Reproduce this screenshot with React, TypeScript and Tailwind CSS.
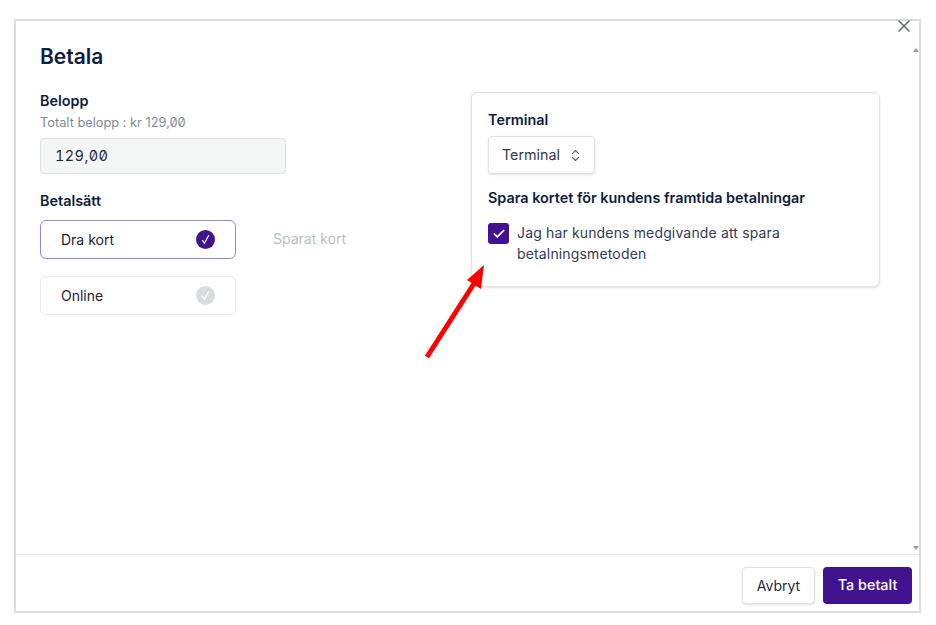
import React from 'react';
import { Check, ChevronsUpDown, X } from 'lucide-react';

function MethodCard({ label, active }: { label: string; active?: boolean }) {
  return (
    <div
      className={
        active
          ? 'flex h-[39px] w-[196px] items-center justify-between rounded-md border border-[#9b84cf] bg-white pl-[20px] pr-[20px]'
          : 'flex h-[39px] w-[196px] items-center justify-between rounded-md border border-[#e8eaec] bg-white pl-[20px] pr-[20px]'
      }
    >
      <span className="text-[14px] text-[#1c2230]">{label}</span>
      <span
        className={
          active
            ? 'flex h-[19px] w-[19px] items-center justify-center rounded-full bg-[#42138f] text-white'
            : 'flex h-[19px] w-[19px] items-center justify-center rounded-full bg-[#d8dde2] text-white'
        }
      >
        <svg width="19" height="19" viewBox="0 0 19 19" fill="none" stroke="currentColor" strokeWidth="1.2">
          <path d="M6.3 10.2 L8.4 13.2 L12.8 5.2" />
        </svg>
      </span>
    </div>
  );
}

export default function App() {
  return (
    <div className="relative h-[625px] w-[936px] overflow-hidden bg-white pl-[14px] pt-[19px] font-['Inter',sans-serif] text-[#0e1c40]">
      <div className="relative flex h-[594px] w-[907px] flex-col border-2 border-[#dcdcdc] bg-white">
        {/* close + scrollbar arrows */}
        <X className="absolute right-[5px] top-[-5px] h-[20px] w-[20px] text-[#5c6f7e]" strokeWidth={2} />
        <div className="absolute right-[0px] top-[27px] h-0 w-0 border-x-[3px] border-b-[4px] border-x-transparent border-b-[#9a9a9a]" />
        <div className="absolute right-[0px] top-[525px] h-0 w-0 border-x-[3px] border-t-[4px] border-x-transparent border-t-[#9a9a9a]" />

        {/* Main content */}
        <div className="flex flex-1 px-6">
          <div className="w-[431px] pt-[21px]">
            <h1 className="text-[21px] font-semibold leading-[30px]">Betala</h1>
            <h2 className="mt-[19px] text-[14.4px] font-semibold leading-[20px]">Belopp</h2>
            <p className="mt-[2px] text-[12.8px] leading-[20px] text-[#7f8c96] [font-feature-settings:'zero']">
              Totalt belopp : kr 129,00
            </p>
            <div className="mt-[5px] flex h-9 w-[246px] items-center rounded border border-[#dde1e3] bg-[#f5f7f7] pl-[14px] text-[14.5px] tracking-[0.4px] text-[#1c2a44] [font-feature-settings:'zero','tnum']">
              129,00
            </div>
            <h2 className="mt-[17px] text-[14.4px] font-semibold leading-[20px]">Betalsätt</h2>
            <div className="mt-[9px] flex items-center">
              <MethodCard label="Dra kort" active />
              <span className="mb-[2px] ml-[37px] text-[14px] text-[#b9bfc4]">Sparat kort</span>
            </div>
            <div className="mt-[17px]">
              <MethodCard label="Online" />
            </div>
          </div>

          <div className="mt-[71px] h-[195px] w-[409px] rounded-md border border-[#dfe3e8] bg-white px-4 pt-[17px] shadow-sm">
            <h2 className="text-[14.4px] font-semibold leading-[20px]">Terminal</h2>
            <div className="mt-[6px] flex h-[38px] w-[107px] items-center gap-[8px] rounded border border-[#dfe3e8] bg-white pl-[13px] text-[14.3px] text-[#333a4d] shadow-sm">
              Terminal
              <ChevronsUpDown className="h-[15px] w-[15px] text-[#5c6470]" strokeWidth={1.75} />
            </div>
            <h2 className="mt-[14px] text-[14.4px] font-semibold leading-[20px]">Spara kortet för kundens framtida betalningar</h2>
            <div className="mt-[15px] flex items-start gap-2">
              <span className="flex h-[21px] w-[21px] shrink-0 items-center justify-center rounded-[3px] bg-[#42138f] text-white">
                <Check className="h-[14px] w-[14px]" strokeWidth={3} />
              </span>
              <p className="mt-[-1px] text-[14px] leading-[21px] tracking-[0.15px] text-[#333a5a]">
                Jag har kundens medgivande att spara
                <br />
                betalningsmetoden
              </p>
            </div>
          </div>
        </div>

        {/* Footer */}
        <div className="flex h-[57px] items-start justify-end gap-2 border-t border-[#e8eaec] pr-[7px] pt-3">
          <button className="h-[37px] w-[73px] rounded border border-[#dfe3e8] bg-white pb-[1px] text-[14px] text-[#1c2a44] shadow-sm">
            Avbryt
          </button>
          <button className="h-[37px] w-[89px] rounded bg-[#42138f] pb-[1px] text-[14.4px] font-medium text-white">
            Ta betalt
          </button>
        </div>
      </div>

      {/* Red annotation arrow */}
      <svg className="absolute left-[420px] top-[260px]" width="70" height="102" viewBox="0 0 70 102">
        <path d="M7 97 L55 22" stroke="#ff0000" strokeWidth="5" fill="none" />
        <path d="M64 5 L61 29 L47 20 Z" fill="#ff0000" />
      </svg>
    </div>
  );
}
